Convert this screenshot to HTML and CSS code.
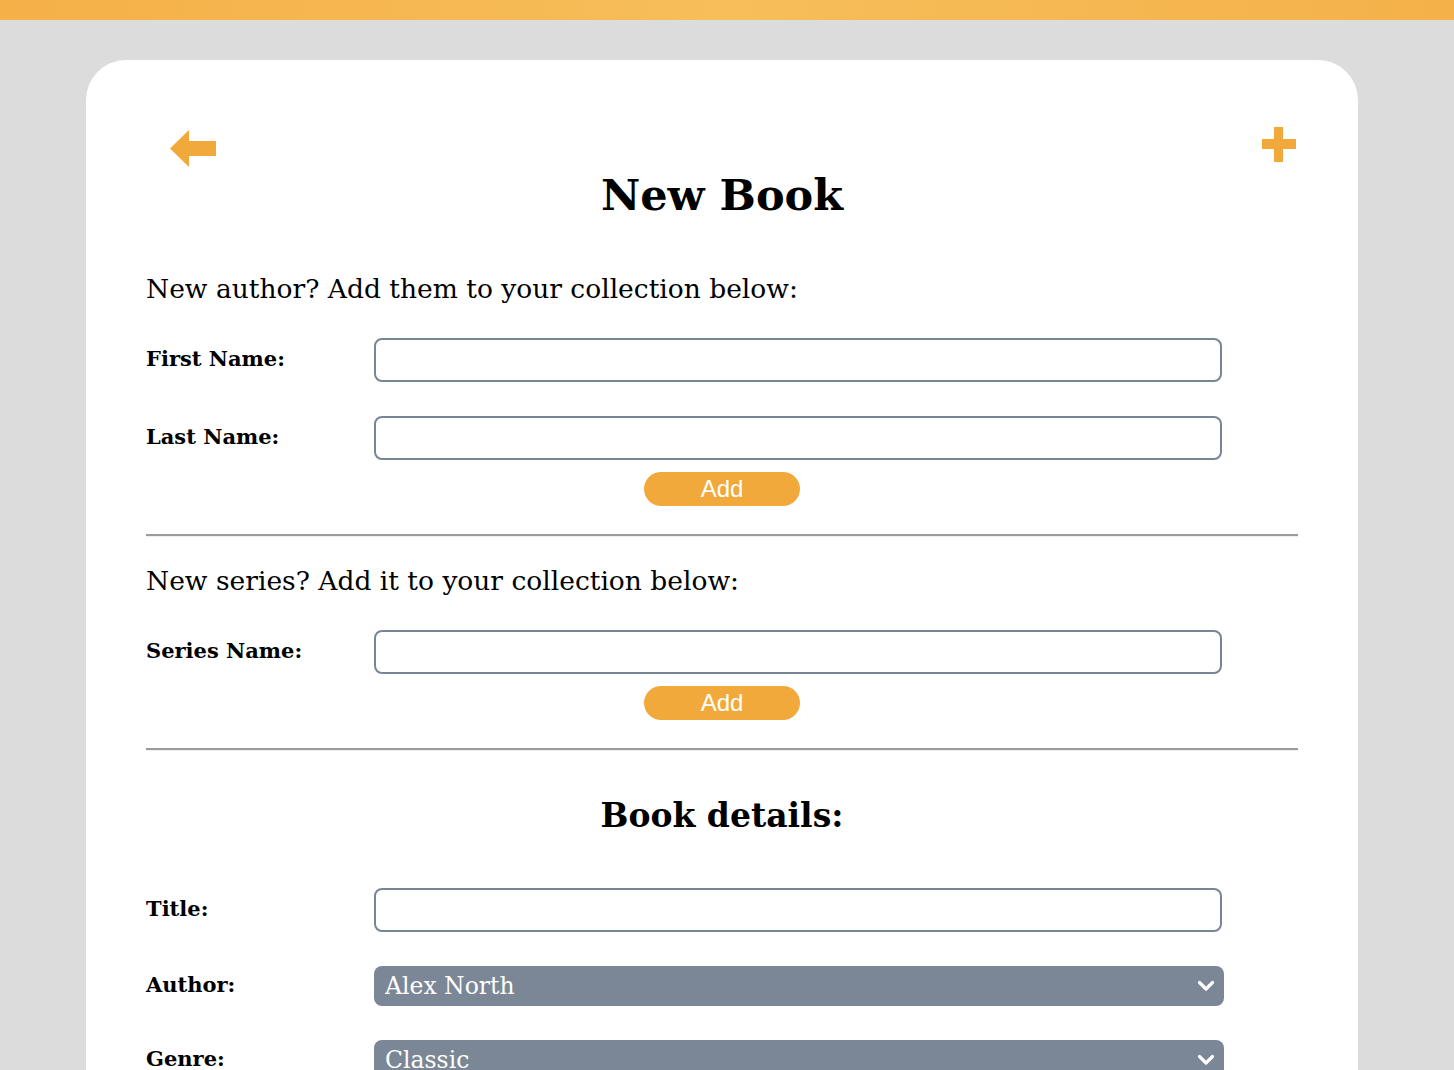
FILE: index.html
```html
<!DOCTYPE html>
<html lang="en">
<head>
<meta charset="utf-8">
<title>New Book</title>
<link rel="stylesheet" href="styles.css">
</head>
<body>
<div class="topbar"></div>
<main class="card">
  <div class="icon-row">
    <a class="back" href="#" aria-label="Back">
      <svg width="46" height="37" viewBox="0 0 46 37"><polygon points="0,18.5 19,0 19,11 46,11 46,26 19,26 19,37" fill="#f2a93b"/></svg>
    </a>
    <a class="plus" href="#" aria-label="Add">
      <svg width="34" height="35" viewBox="0 0 34 35"><rect x="12" y="0" width="9" height="35" fill="#f2a93b"/><rect x="0" y="12" width="34" height="10" fill="#f2a93b"/></svg>
    </a>
  </div>
  <h1 class="title">New Book</h1>

  <section class="section">
    <p class="intro">New author? Add them to your collection below:</p>
    <div class="field">
      <label class="label">First Name:</label>
      <input class="input" type="text">
    </div>
    <div class="field">
      <label class="label">Last Name:</label>
      <input class="input" type="text">
    </div>
    <div class="btn-row"><button class="add-btn">Add</button></div>
  </section>
  <hr class="divider">

  <section class="section">
    <p class="intro">New series? Add it to your collection below:</p>
    <div class="field">
      <label class="label">Series Name:</label>
      <input class="input" type="text">
    </div>
    <div class="btn-row"><button class="add-btn">Add</button></div>
  </section>
  <hr class="divider">

  <h2 class="subtitle">Book details:</h2>
  <div class="field field-first">
    <label class="label">Title:</label>
    <input class="input" type="text">
  </div>
  <div class="field">
    <label class="label">Author:</label>
    <div class="select-wrap">
      <select class="select"><option>Alex North</option></select>
      <svg class="chev" width="18" height="12" viewBox="0 0 18 12"><polyline points="2.5,2.5 9,9 15.5,2.5" fill="none" stroke="#fff" stroke-width="3.2" stroke-linecap="round" stroke-linejoin="round"/></svg>
    </div>
  </div>
  <div class="field">
    <label class="label">Genre:</label>
    <div class="select-wrap">
      <select class="select"><option>Classic</option></select>
      <svg class="chev" width="18" height="12" viewBox="0 0 18 12"><polyline points="2.5,2.5 9,9 15.5,2.5" fill="none" stroke="#fff" stroke-width="3.2" stroke-linecap="round" stroke-linejoin="round"/></svg>
    </div>
  </div>
</main>
</body>
</html>
```
FILE: styles.css
```css
* { box-sizing: border-box; }
html, body { margin: 0; padding: 0; }
body {
  background: #dcdcdc;
  font-family: "DejaVu Serif", "Liberation Serif", serif;
  color: #000;
  height: 1070px;
  overflow: hidden;
}
.topbar {
  height: 20px;
  background: linear-gradient(90deg, #f5b048 0%, #f7be5a 50%, #f4b14a 100%);
}
.card {
  margin: 40px 96px 0 86px;
  width: 1272px;
  background: #fff;
  border-radius: 40px 40px 0 0;
  padding: 67px 60px 40px 60px;
  min-height: 1200px;
}
.icon-row {
  display: flex;
  justify-content: space-between;
  align-items: flex-start;
  height: 39px;
}
.back { display: block; margin: 3px 0 0 24px; line-height: 0; }
.plus { display: block; margin-right: 2px; line-height: 0; }
.title {
  margin: 0;
  text-align: center;
  font-size: 43px;
  line-height: 58px;
  font-weight: bold;
}
.intro {
  margin: 48px 0 0 0;
  font-size: 26.5px;
  line-height: 34px;
}
.divider + .section .intro { margin-top: 27px; }
.field {
  display: flex;
  align-items: center;
  margin-top: 34px;
}
.intro + .field { margin-top: 32px; }
.field-first { margin-top: 48px; }
.label {
  width: 228px;
  flex: none;
  font-size: 21px;
  font-weight: bold;
  position: relative;
  top: -2px;
}
.input {
  width: 848px;
  height: 44px;
  border: 2px solid #7a8594;
  border-radius: 8px;
  background: #fff;
  font: inherit;
  font-size: 22px;
  padding: 0 10px;
}
.btn-row {
  display: flex;
  justify-content: center;
  margin-top: 12px;
}
.add-btn {
  width: 156px;
  height: 34px;
  border: none;
  border-radius: 17px;
  background: #f2a93b;
  color: #fff;
  font-family: "Liberation Sans", Arial, sans-serif;
  font-size: 24px;
  line-height: 34px;
  padding: 0;
}
.divider {
  margin: 28px 0 0 0;
  height: 0;
  border: none;
  border-top: 2px solid #9c9c9c;
  border-bottom: 1px solid #eeeeee;
}
.subtitle {
  margin: 41px 0 0 0;
  text-align: center;
  font-size: 33px;
  line-height: 48px;
  font-weight: bold;
}
.select-wrap {
  position: relative;
  width: 850px;
  height: 40px;
}
.select {
  appearance: none;
  -webkit-appearance: none;
  width: 100%;
  height: 40px;
  border: none;
  border-radius: 8px;
  background: #7b8796;
  color: #fff;
  font-family: "DejaVu Serif", "Liberation Serif", serif;
  font-size: 23.5px;
  padding: 0 40px 0 11px;
}
.chev {
  position: absolute;
  right: 9px;
  top: 14px;
  pointer-events: none;
}
```
